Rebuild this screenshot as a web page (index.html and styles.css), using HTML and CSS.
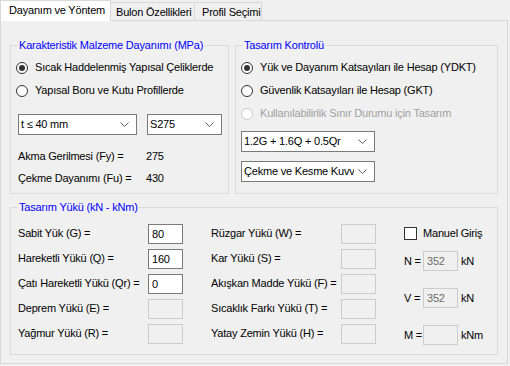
FILE: index.html
```html
<!DOCTYPE html>
<html>
<head>
<meta charset="utf-8">
<link rel="stylesheet" href="styles.css">
</head>
<body>
<div class="tabs">
  <div class="tab active">Dayanım ve Yöntem</div>
  <div class="tab t2">Bulon Özellikleri</div>
  <div class="tab t3">Profil Seçimi</div>
</div>
<div class="page">
  <div class="row1">
    <div class="group g1">
      <div class="gtitle">Karakteristik Malzeme Dayanımı (MPa)</div>
      <div class="radios">
        <div class="radio-row"><span class="radio checked"></span><span>Sıcak Haddelenmiş Yapısal Çeliklerde</span></div>
        <div class="radio-row"><span class="radio"></span><span>Yapısal Boru ve Kutu Profillerde</span></div>
      </div>
      <div class="combos">
        <div class="combo c-t"><span class="ctext">t ≤ 40 mm</span><svg class="chev" width="9" height="5" viewBox="0 0 9 5"><path d="M0.5 0.5 L4.5 4.5 L8.5 0.5" fill="none" stroke="#606060" stroke-width="1"/></svg></div>
        <div class="combo c-s"><span class="ctext">S275</span><svg class="chev" width="9" height="5" viewBox="0 0 9 5"><path d="M0.5 0.5 L4.5 4.5 L8.5 0.5" fill="none" stroke="#606060" stroke-width="1"/></svg></div>
      </div>
      <div class="props">
        <div class="prop"><span class="plabel">Akma Gerilmesi (Fy) =</span><span>275</span></div>
        <div class="prop"><span class="plabel">Çekme Dayanımı (Fu) =</span><span>430</span></div>
      </div>
    </div>
    <div class="group g2">
      <div class="gtitle">Tasarım Kontrolü</div>
      <div class="radios">
        <div class="radio-row"><span class="radio checked"></span><span>Yük ve Dayanım Katsayıları ile Hesap (YDKT)</span></div>
        <div class="radio-row"><span class="radio"></span><span>Güvenlik Katsayıları ile Hesap (GKT)</span></div>
        <div class="radio-row disabled"><span class="radio"></span><span>Kullanılabilirlik Sınır Durumu için Tasarım</span></div>
      </div>
      <div class="combo c-w c-first"><span class="ctext">1.2G + 1.6Q + 0.5Qr</span><svg class="chev" width="9" height="5" viewBox="0 0 9 5"><path d="M0.5 0.5 L4.5 4.5 L8.5 0.5" fill="none" stroke="#606060" stroke-width="1"/></svg></div>
      <div class="combo c-w c-second"><span class="ctext">Çekme ve Kesme Kuvveti</span><svg class="chev" width="9" height="5" viewBox="0 0 9 5"><path d="M0.5 0.5 L4.5 4.5 L8.5 0.5" fill="none" stroke="#606060" stroke-width="1"/></svg></div>
    </div>
  </div>
  <div class="group g3">
    <div class="gtitle">Tasarım Yükü (kN - kNm)</div>
    <div class="loads">
      <div class="col">
        <div class="lrow"><span class="llabel">Sabit Yük (G) =</span><span class="box">80</span></div>
        <div class="lrow"><span class="llabel">Hareketli Yükü (Q) =</span><span class="box">160</span></div>
        <div class="lrow"><span class="llabel">Çatı Hareketli Yükü (Qr) =</span><span class="box">0</span></div>
        <div class="lrow"><span class="llabel">Deprem Yükü (E) =</span><span class="box off"></span></div>
        <div class="lrow"><span class="llabel">Yağmur Yükü (R) =</span><span class="box off"></span></div>
      </div>
      <div class="col">
        <div class="lrow"><span class="llabel">Rüzgar Yükü (W) =</span><span class="box off"></span></div>
        <div class="lrow"><span class="llabel">Kar Yükü (S) =</span><span class="box off"></span></div>
        <div class="lrow"><span class="llabel">Akışkan Madde Yükü (F) =</span><span class="box off"></span></div>
        <div class="lrow"><span class="llabel">Sıcaklık Farkı Yükü (T) =</span><span class="box off"></span></div>
        <div class="lrow"><span class="llabel">Yatay Zemin Yükü (H) =</span><span class="box off"></span></div>
      </div>
      <div class="col col3">
        <div class="chkrow"><span class="check"></span><span>Manuel Giriş</span></div>
        <div class="frow"><span class="flabel">N =</span><span class="box off">352</span><span class="unit">kN</span></div>
        <div class="frow"><span class="flabel">V =</span><span class="box off">352</span><span class="unit">kN</span></div>
        <div class="frow"><span class="flabel">M =</span><span class="box off"></span><span class="unit">kNm</span></div>
      </div>
    </div>
  </div>
</div>
</body>
</html>
```
FILE: styles.css
```css
* { box-sizing: border-box; }
html, body { margin: 0; padding: 0; }
body {
  width: 510px;
  height: 366px;
  background: #f0f0f0;
  font-family: "Liberation Sans", Arial, sans-serif;
  font-size: 11px;
  line-height: 13px;
  letter-spacing: -0.2px;
  color: #000;
  overflow: hidden;
}
.tabs {
  display: flex;
  height: 20px;
  align-items: flex-end;
}
.tab {
  height: 18px;
  border: 1px solid #d9d9d9;
  border-bottom: none;
  border-left: none;
  background: #f0f0f0;
  padding-top: 3px;
  white-space: nowrap;
}
.tab.active {
  position: relative;
  z-index: 2;
  height: 21px;
  margin-bottom: -1px;
  width: 111px;
  border-left: 1px solid #d9d9d9;
  background: #fff;
  padding: 3px 0 0 8px;
}
.tab.t2 { width: 84px; padding-left: 5px; }
.tab.t3 { width: 67px; padding-left: 7px; }
.page {
  position: relative;
  z-index: 1;
  width: 508px;
  height: 344px;
  border: 1px solid #d9d9d9;
  padding: 24px 0 0 9px;
}
.row1 {
  display: flex;
  gap: 6px;
  height: 149px;
}
.group {
  border: 1px solid #dcdcdc;
}
.gtitle {
  display: block;
  width: max-content;
  margin: -7px 0 0 7px;
  padding: 0 1px;
  background: #f0f0f0;
  color: #0000ff;
  line-height: 13px;
}
.g1 { width: 219px; height: 149px; }
.g2 { width: 263px; height: 149px; }
.g3 { width: 488px; height: 148px; margin-top: 13px; }
.radios { margin-top: 4px; padding-left: 5px; }
.radio-row {
  display: flex;
  align-items: center;
  height: 23px;
  gap: 7px;
  white-space: nowrap;
}
.radio {
  width: 12px;
  height: 12px;
  border: 1px solid #333;
  border-radius: 50%;
  background: #fff;
  flex: none;
  display: flex;
  align-items: center;
  justify-content: center;
}
.radio.checked::after {
  content: "";
  width: 6px;
  height: 6px;
  border-radius: 50%;
  background: #333;
}
.radio-row.disabled { color: #a0a0a0; }
.radio-row.disabled .radio { border-color: #cccccc; }
.combos {
  display: flex;
  gap: 10px;
  padding-left: 7px;
  margin-top: 12px;
}
.combo {
  height: 21px;
  border: 1px solid #7a7a7a;
  background: #fff;
  display: flex;
  align-items: center;
  padding-left: 2px;
  overflow: hidden;
  white-space: nowrap;
}
.ctext { flex: 1; overflow: hidden; }
.chev { flex: none; margin: 0 7px 0 4px; }
.c-t { width: 119px; }
.c-s { width: 75px; }
.c-w { width: 134px; margin-left: 5px; }
.c-first { margin-top: 6px; }
.c-second { margin-top: 9px; }
.props { margin-top: 10px; padding-left: 7px; }
.prop { display: flex; align-items: center; height: 22px; }
.plabel { width: 128px; }
.loads {
  display: flex;
  gap: 28px;
  padding: 7px 0 0 7px;
}
.lrow {
  display: flex;
  align-items: center;
  height: 25px;
}
.llabel { width: 130px; white-space: nowrap; }
.box {
  width: 35px;
  height: 20px;
  border: 1px solid #7a7a7a;
  background: #fff;
  padding-left: 3px;
  line-height: 18px;
}
.box.off {
  border-color: #cccccc;
  background: #f0f0f0;
  color: #6d6d6d;
}
.chkrow {
  display: flex;
  align-items: center;
  height: 25px;
  gap: 6px;
}
.check {
  width: 13px;
  height: 13px;
  border: 1px solid #333;
  background: #fff;
}
.frow {
  display: flex;
  align-items: center;
  height: 20px;
  margin-top: 17px;
}
.chkrow + .frow { margin-top: 5px; }
.flabel { width: 19px; white-space: nowrap; }
.unit { margin-left: 3px; }
```
